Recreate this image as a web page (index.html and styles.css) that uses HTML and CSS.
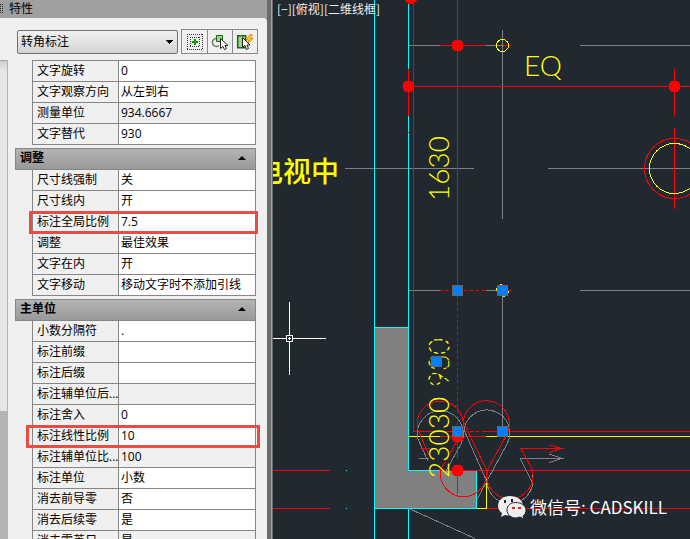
FILE: index.html
```html
<!DOCTYPE html>
<html lang="zh-CN">
<head>
<meta charset="utf-8">
<title>特性</title>
<link rel="stylesheet" href="styles.css">
</head>
<body>
<div class="app">
  <aside class="palette">
    <header class="titlebar"><span class="grip"></span><h1>特性</h1></header>
    <div class="palette-body">
      <div class="scroll-gutter"><div class="scroll-thumb"></div></div>
      <div class="content">
        <div class="toolbar">
          <select class="picker" aria-label="对象类型"><option>转角标注</option></select>
          <div class="tools">
            <button type="button" aria-label="选择">
              <svg width="18" height="18" viewBox="0 0 18 18"><g fill="none" stroke="#333" stroke-dasharray="1 1"><path d="M1 1.500h16M1 16.500h16M1.500 1v16M16.500 1v16"/><path d="M4 4.500h10M4 13.500h10M4.500 4v10M13.500 4v10"/></g><path fill="#00a000" d="M8 6h2v2h2v2h-2v2H8v-2H6V8h2z"/></svg>
            </button>
            <button type="button" aria-label="选择对象">
              <svg width="18" height="18" viewBox="0 0 18 18"><path fill="none" stroke="#777" stroke-width="1.500" d="M8 12.500a4 4 0 1 1-3-7"/><path fill="#a9cf8a" stroke="#176b17" d="M5.500 2.500h6v6h-6z"/><path fill="#fff" stroke="#222" d="M9.500 5.500v10l2.500-2 1.500 3 2-1-1.500-3h3z"/></svg>
            </button>
            <button type="button" aria-label="快速选择">
              <svg width="18" height="18" viewBox="0 0 18 18"><path fill="#a9cf8a" stroke="#176b17" stroke-width="1.500" d="M1.700 2.700h8v12h-8z"/><path fill="#ffdc37" stroke="#e88300" d="M14 1.500 10.500 7H13l-1.500 4L17 5.500h-3L16.500 2z"/><path fill="#fff" stroke="#222" d="M6.500 4.500v10l2.500-2 1.500 4 2-1-1.500-3.500h3z"/></svg>
            </button>
          </div>
        </div>

        <table class="props first">
          <tr><th scope="row">文字旋转</th><td>0</td></tr>
          <tr><th scope="row">文字观察方向</th><td>从左到右</td></tr>
          <tr><th scope="row">测量单位</th><td class="readonly">934.6667</td></tr>
          <tr><th scope="row">文字替代</th><td>930</td></tr>
        </table>

        <button type="button" class="group">调整<span class="arrow"></span></button>
        <table class="props">
          <tr><th scope="row">尺寸线强制</th><td>关</td></tr>
          <tr><th scope="row">尺寸线内</th><td>开</td></tr>
          <tr><th scope="row">标注全局比例</th><td class="marked">7.5</td></tr>
          <tr><th scope="row">调整</th><td>最佳效果</td></tr>
          <tr><th scope="row">文字在内</th><td>开</td></tr>
          <tr><th scope="row">文字移动</th><td>移动文字时不添加引线</td></tr>
        </table>

        <button type="button" class="group">主单位<span class="arrow"></span></button>
        <table class="props">
          <tr><th scope="row">小数分隔符</th><td>.</td></tr>
          <tr><th scope="row">标注前缀</th><td></td></tr>
          <tr><th scope="row">标注后缀</th><td></td></tr>
          <tr><th scope="row">标注辅单位后...</th><td class="readonly"></td></tr>
          <tr><th scope="row">标注舍入</th><td>0</td></tr>
          <tr><th scope="row">标注线性比例</th><td class="marked wide">10</td></tr>
          <tr><th scope="row">标注辅单位比...</th><td class="readonly">100</td></tr>
          <tr><th scope="row">标注单位</th><td>小数</td></tr>
          <tr><th scope="row">消去前导零</th><td>否</td></tr>
          <tr><th scope="row">消去后续零</th><td>是</td></tr>
          <tr><th scope="row">消去零英尺</th><td class="readonly">是</td></tr>
        </table>
      </div>
    </div>
  </aside>
  <div class="splitter"></div>

  <main class="viewport">
    <svg class="drawing" width="100%" height="100%">
      <g transform="translate(-273 0)">
        <path class="wall" d="M374 327h35v143h68v39H374z"/>
        <g class="line gray">
          <path d="M408 45.500h32M486 45.500h22M580 45.500h2000M345 168.500h129M548 168.500h2000M408 290.500h32M486 290.500h16M580 290.500h2000"/>
          <path d="M502.500 30v189M502.500 290v141M410 509l65 29.500"/>
        </g>
        <path class="line cyan" d="M374.500 0v539M408.500 0v471M408.500 508v31M374 327.500h35M408 470.500h32M476.500 470v39M374 508.500h103"/>
        <path class="line cyan" d="M346 470.500h1M346 508.500h1"/>
        <g class="line red">
          <path class="faint" d="M413.500 0v431.500h26M457.500 0v290M483 431.500h2200"/>
          <path d="M440 45.500h46M504 45.500h7M408 86.500h2300M408.500 69v47M408.500 132v1M674.500 69v47M674.500 128v81"/>
          <path d="M440 470.500h2300M487 508.500h2300M273 470.500h57M273 508.500h57M457.500 437v22M457.500 470v24M440 431.500h20"/>
          <path class="dash" d="M440 290.500h46M457.500 296v136M440 431.500h46"/>
          <circle cx="674.500" cy="168.500" r="30"/>
        </g>
        <g class="line yellow">
          <path d="M408 436.500h32M486 436.500h2200M486.500 476v33M477 508.500h10"/>
          <circle cx="502.500" cy="45.500" r="6"/>
          <circle cx="674.500" cy="168.500" r="25"/>
          <circle class="dash" cx="502.500" cy="290.500" r="6"/>
        </g>
        <path class="line red" d="M440 436.500h46M502 285.500v-2M504 290.500h7"/>
        <g class="line gray">
          <path d="M428 461 418 439A23 23 0 1 1 461 444L441 480M419 458.500h10"/>
          <path d="M464 430A23 23 0 1 1 507 444L481 492Q478 499 477 499M464 430l23 52a23 23 0 1 0 45-8l1 10-13-26h41M549 454l13 4.500-13 4"/>
        </g>
        <g class="line red">
          <path d="M429 455 418 430A23 23 0 1 1 461 434L441 469A23 23 0 1 0 486 469L464 423M420 448.500h10"/>
          <path d="M464 429A23 23 0 1 1 507 434L488 469A23 23 0 1 0 532 469L521 448.500h41M549 445l13 3.500-13 4"/>
        </g>
        <g class="red-fill">
          <circle cx="411" cy="-3" r="7"/>
          <circle cx="457.500" cy="45.500" r="6"/>
          <circle cx="408.500" cy="86.500" r="6"/>
          <circle cx="674.500" cy="86.500" r="6"/>
          <circle cx="457.500" cy="436.500" r="6"/>
          <circle cx="457.500" cy="470.500" r="6"/>
        </g>
        <g class="cad-text">
          <text x="524" y="76">EQ</text>
          <text transform="translate(449 201) rotate(-90)">1630</text>
          <text class="selected" transform="translate(449 387) rotate(-90)">930</text>
          <text transform="translate(449 478) rotate(-90)">23030</text>
        </g>
        <text class="room" x="255" y="182">电视中</text>
        <g class="grips">
          <path d="M452.500 285.500h10v10h-10zM497.500 285.500h10v10h-10zM431.500 356.500h10v10h-10zM452.500 426.500h10v10h-10zM497.500 426.500h10v10h-10z"/>
        </g>
        <path class="line cursor" d="M273 338.500h53M289.500 302v73"/>
        <path class="cursor line box" d="M286.500 335.500h6v6h-6z"/>
        <path class="line cursor" d="M288 338.500h3M289.500 337v3"/>
        <g class="logo">
          <path fill="#eee" d="M510 496c-7 0-12 4-12 10 0 3 2 6 4 7l-1 4 4-2 6 1c7 0 12-4 12-10s-6-10-13-10z"/>
          <path fill="#eee" stroke="#252a31" d="M515.500 502.500c-5 0-8.500 3-8.500 7.500s4 8 9 8l4-1 4 2-1-3c2-1 3-4 3-6 0-4.500-5-7.500-10.500-7.500z"/>
          <path fill="#252a31" d="M504 500h2v3h-2zM511 499h2v3h-2z"/>
          <path fill="#d92727" d="M512 507h3v2h-3zM518 507h3v2h-3z"/>
        </g>
        <text class="watermark" x="530" y="514">微信号: CADSKILL</text>
        <text class="view-label" x="277" y="14">[−][俯视][二维线框]</text>
      </g>
    </svg>
  </main>
</div>
</body>
</html>
```
FILE: styles.css
```css
* { box-sizing: border-box; }

body {
  margin: 0;
  overflow: hidden;
  font-family: "Open Sans", "Noto Sans CJK SC", sans-serif;
  font-size: 12px;
  color: #000;
}

.app { display: flex; height: 100vh; }

/* properties palette */
.palette {
  display: flex;
  flex: 0 0 267px;
  flex-direction: column;
  overflow: hidden;
  background: #a0a0a0;
}

.splitter {
  flex: 0 0 6px;
  background: linear-gradient(to right, #686d6a 4px, #a8a2a2 4px 5px, #6a6a6a 5px);
}

.titlebar {
  display: flex;
  flex: 0 0 18px;
  align-items: center;
  gap: 6px;
}

.titlebar h1 { margin: 0; font-size: 12px; font-weight: 400; line-height: 16px; }

.grip {
  width: 3px;
  height: 10px;
  background:
    linear-gradient(to right, transparent 1px, #a0a0a0 1px 2px, transparent 2px),
    repeating-linear-gradient(to bottom, #222 0 1px, #a0a0a0 1px 2px);
}

.palette-body {
  display: flex;
  flex: 1;
  min-height: 0;
  background: #f0f0f0;
  border-top-right-radius: 4px;
}

.scroll-gutter {
  flex: 0 0 8px;
  padding-top: 42px;
  background: linear-gradient(#f0f0f0 42px, #b3b3b3 42px);
}

.scroll-thumb {
  height: 351px;
  background: linear-gradient(#d0d0d0, #e6e6e6 10px);
  border-top: 1px solid #a8a8a8;
  border-right: 1px solid #b3b3b3;
}

.content { flex: 1; padding: 11px 11px 0 7px; }

.toolbar { display: flex; align-items: center; gap: 3px; margin: 0 -2px 6px 2px; }

/* the two diagonal gradients meet to form the drop-down arrow */
.picker {
  flex: 1;
  min-width: 0;
  height: 24px;
  padding: 0 3px;
  appearance: none;
  border: 1px solid #707070;
  border-radius: 2px;
  background:
    linear-gradient(45deg, transparent 50%, #000 50%) right 7px top 9px / 4px 4px no-repeat,
    linear-gradient(-45deg, transparent 50%, #000 50%) right 3px top 9px / 4px 4px no-repeat,
    linear-gradient(#f2f2f2, #d2d2d2);
  font: inherit;
  color: inherit;
}

.tools { display: flex; border: 1px solid #8a8a8a; }

.tools button {
  display: flex;
  align-items: center;
  justify-content: center;
  width: 25px;
  height: 23px;
  padding: 0;
  border: 0;
  background: #f0f0f0;
}

.tools button + button { border-left: 1px solid #8a8a8a; }

.group {
  display: flex;
  align-items: center;
  justify-content: space-between;
  width: 100%;
  height: 22px;
  margin-top: 3px;
  padding: 0 9px 2px 4px;
  border: 1px solid #868686;
  background: linear-gradient(#b4b4b4, #999);
  font: 700 12px/18px "Open Sans", "Noto Sans CJK SC", sans-serif;
  color: #000;
}

.arrow {
  border: 4px solid transparent;
  border-top-width: 0;
  border-bottom-color: #000;
}

.props {
  width: calc(100% - 17px);
  margin-left: 17px;
  border-spacing: 0;
  border-left: 1px solid #868686;
  table-layout: fixed;
}

.first { border-top: 1px solid #868686; }

.props th,
.props td {
  height: 21px;
  padding: 0 0 0 4px;
  border-bottom: 1px solid #868686;
  font-weight: 400;
  line-height: 20px;
  text-align: left;
  white-space: nowrap;
}

.props th { width: 86px; border-right: 1px solid #868686; }

.props td { padding-left: 2px; border-right: 1px solid #868686; background: #fff; }

.props td.readonly { background: #f0f0f0; }

/* frame round a whole row, reaching back over the 86px label column */
.props td.marked { position: relative; }

.marked::after {
  position: absolute;
  inset: -1px -3px -2px -90px;
  border: 3px solid #e84c44;
  content: "";
}

.marked.wide::after { inset: -1px -5px -2px -93px; }

/* drawing area */
.viewport { flex: 1; min-width: 0; background: #212830; }

.drawing { display: block; shape-rendering: crispEdges; }

.wall { fill: #808080; }
.line { fill: none; stroke-width: 1; }
.gray { stroke: #808080; }
.cyan { stroke: #0ff; }
.red { stroke: #f00; }
.yellow { stroke: #ff0; }
.cursor { stroke: #fff; }
.box { fill: #212830; }
.dash { stroke-dasharray: 3 3; }
.red .faint { stroke: #e00a0e; }
.red-fill { fill: #f00; }
.grips path { fill: #0080ff; stroke: #666; }
.logo { shape-rendering: auto; }

.cad-text {
  fill: #ff0;
  font-family: Lato, sans-serif;
  font-size: 28px;
  font-weight: 300;
}

.cad-text .selected { fill: none; stroke: #ff0; stroke-dasharray: 3 4; font-weight: 100; }

.room { fill: #ff0; font-family: "Noto Sans CJK SC", sans-serif; font-size: 28px; font-weight: 500; }

.watermark {
  fill: #fff;
  font-family: "Noto Sans CJK SC", sans-serif;
  font-size: 17px;
}

.view-label { fill: #eee; font-family: "Noto Sans CJK SC", sans-serif; font-size: 12px; }
```
